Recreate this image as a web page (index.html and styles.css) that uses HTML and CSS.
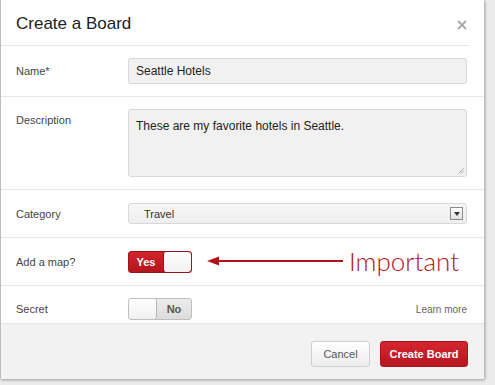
FILE: index.html
```html
<!DOCTYPE html>
<html>
<head>
<meta charset="utf-8">
<link rel="stylesheet" href="styles.css">
</head>
<body>
<div class="dialog">
  <div class="head">
    <div class="head-bar">
      <h1 class="title">Create a Board</h1>
      <svg class="close" width="10" height="10" viewBox="0 0 10 10"><path d="M1 1 L9 9 M9 1 L1 9" stroke="#a8a8a8" stroke-width="1.8"/></svg>
    </div>
    <div class="head-rule"></div>
  </div>
  <div class="row row-name">
    <div class="label">Name*</div>
    <div class="field input">Seattle Hotels</div>
  </div>
  <div class="row row-desc">
    <div class="label label-top">Description</div>
    <div class="field textarea">These are my favorite hotels in Seattle.
      <svg class="grip" width="6" height="6" viewBox="0 0 6 6"><path d="M5.5 0.5 L0.5 5.5 M5.5 3 L3 5.5" stroke="#999" stroke-width="0.8"/></svg>
    </div>
  </div>
  <div class="row row-cat">
    <div class="label">Category</div>
    <div class="field select"><span>Travel</span><span class="sel-btn"><svg width="6" height="4" viewBox="0 0 6 4"><path d="M0 0 H6 L3 4 Z" fill="#333"/></svg></span></div>
  </div>
  <div class="row row-map">
    <div class="label">Add a map?</div>
    <div class="toggle on"><span class="t-text">Yes</span><span class="knob"></span></div>
    <div class="callout">
      <svg class="arrow" width="136" height="10" viewBox="0 0 136 10"><path d="M0 5 L12 0.5 L12 9.5 Z" fill="#b3121b"/><path d="M11 5 H136" stroke="#b3121b" stroke-width="2"/></svg>
      <span class="important">Important</span>
    </div>
  </div>
  <div class="row row-secret">
    <div class="label">Secret</div>
    <div class="toggle off"><span class="knob"></span><span class="t-text">No</span></div>
    <a class="learn">Learn more</a>
  </div>
  <div class="footer">
    <button class="btn cancel">Cancel</button>
    <button class="btn create">Create Board</button>
  </div>
</div>
</body>
</html>
```

FILE: styles.css
```css
html, body {
  margin: 0;
  padding: 0;
}
body {
  width: 495px;
  height: 385px;
  background: #ececec;
  font-family: "Liberation Sans", Arial, sans-serif;
  overflow: hidden;
}
.dialog {
  width: 484px;
  height: 379px;
  background: #fff;
  border-left: 1px solid #bdbdbd;
  box-shadow: 1px 1px 3px rgba(0,0,0,0.35);
  display: flex;
  flex-direction: column;
  box-sizing: border-box;
}
.head-bar {
  height: 45px;
  display: flex;
  align-items: center;
  justify-content: space-between;
  padding: 0 17px 0 15px;
}
.title {
  margin: 0;
  font-size: 17px;
  font-weight: normal;
  color: #222;
  padding-top: 2px;
}
.close {
  display: block;
  margin-top: 5px;
}
.head-rule {
  height: 1px;
  background: #e6e6e6;
  margin-right: 15px;
}
.row {
  display: flex;
  align-items: center;
  padding: 0 17px 0 15px;
  border-bottom: 1px solid #e6e6e6;
}
.label {
  width: 112px;
  font-size: 11px;
  color: #444;
}
.label-top {
  align-self: flex-start;
  padding-top: 5px;
}
.field {
  flex: 1;
  box-sizing: border-box;
  border: 1px solid #d8d8d8;
  border-radius: 3px;
  background: #f1f1f1;
  font-size: 12px;
  color: #222;
}
.row-name {
  height: 50px;
}
.input {
  height: 26px;
  padding: 0 7px;
  display: flex;
  align-items: center;
}
.row-desc {
  height: 93px;
  align-items: flex-start;
  padding-top: 12px;
  box-sizing: border-box;
}
.textarea {
  height: 68px;
  padding: 9px 7px;
  position: relative;
}
.grip {
  position: absolute;
  right: 2px;
  bottom: 2px;
}
.row-cat {
  height: 47px;
}
.select {
  height: 21px;
  display: flex;
  align-items: center;
  justify-content: space-between;
  padding: 0 3px 0 15px;
  background: linear-gradient(#f7f7f7, #eeeeee);
  font-size: 11px;
  color: #333;
}
.sel-btn {
  width: 11px;
  height: 11px;
  border: 1px solid #8a8a8a;
  background: linear-gradient(#fdfdfd, #e2e2e2);
  display: flex;
  align-items: center;
  justify-content: center;
}
.row-map {
  height: 47px;
}
.toggle {
  width: 64px;
  height: 22px;
  box-sizing: border-box;
  border-radius: 3px;
  display: flex;
  overflow: hidden;
  font-size: 11px;
  font-weight: bold;
}
.toggle.on {
  border: 1px solid #9a1419;
  background: linear-gradient(#d2232c, #b3161e);
}
.toggle.off {
  border: 1px solid #bdbdbd;
  background: linear-gradient(#ebebeb, #dcdcdc);
}
.t-text {
  flex: 1;
  display: flex;
  align-items: center;
  justify-content: center;
}
.on .t-text {
  color: #fff;
}
.off .t-text {
  color: #555;
}
.knob {
  width: 28px;
  background: linear-gradient(#ffffff, #f0f0f0);
  border-radius: 3px;
  box-sizing: border-box;
}
.on .knob {
  border-left: 1px solid #9a1419;
}
.off .knob {
  border-right: 1px solid #b5b5b5;
}
.callout {
  display: flex;
  align-items: center;
  margin-left: 15px;
  margin-top: -2px;
}
.arrow {
  display: block;
}
.important {
  font-family: "Lato", "Open Sans", sans-serif;
  font-weight: 300;
  font-size: 26px;
  color: #b3121b;
  margin-left: 6px;
  line-height: 1;
}
.row-secret {
  height: 37px;
  box-sizing: border-box;
  padding-top: 12px;
  align-items: flex-start;
  border-bottom: none;
}
.row-secret .label {
  padding-top: 5px;
}
.learn {
  margin-left: auto;
  margin-top: 6px;
  font-size: 10px;
  color: #666;
}
.footer {
  flex: 1;
  background: #f2f2f2;
  border-top: 1px solid #e4e4e4;
  display: flex;
  align-items: center;
  justify-content: flex-end;
  gap: 10px;
  padding: 4px 16px 0 0;
}
.btn {
  height: 26px;
  border-radius: 3px;
  font-family: "Liberation Sans", Arial, sans-serif;
  font-size: 11px;
  padding: 0;
}
.cancel {
  width: 59px;
  border: 1px solid #cfcfcf;
  background: linear-gradient(#ffffff, #ececec);
  color: #555;
}
.create {
  width: 88px;
  border: 1px solid #a8161d;
  background: linear-gradient(#d42530, #b8161f);
  color: #fff;
  font-weight: bold;
}
```
